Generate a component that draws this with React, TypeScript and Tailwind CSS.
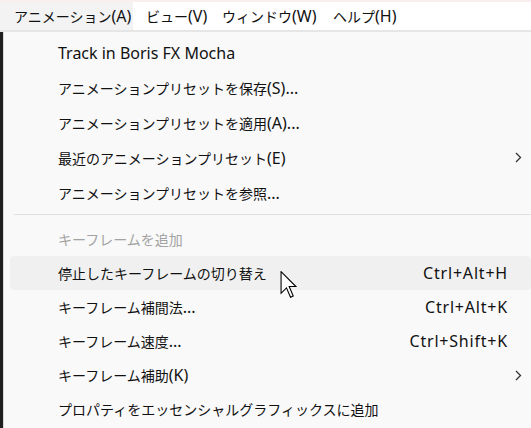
import React from "react";

type Item =
  | { kind: "item"; label: string; shortcut?: string; sub?: boolean; disabled?: boolean; active?: boolean }
  | { kind: "sep" };

const top: Item[] = [
  { kind: "item", label: "Track in Boris FX Mocha" },
  { kind: "item", label: "アニメーションプリセットを保存(S)..." },
  { kind: "item", label: "アニメーションプリセットを適用(A)..." },
  { kind: "item", label: "最近のアニメーションプリセット(E)", sub: true },
  { kind: "item", label: "アニメーションプリセットを参照..." },
];

const bottom: Item[] = [
  { kind: "item", label: "キーフレームを追加", disabled: true },
  { kind: "item", label: "停止したキーフレームの切り替え", shortcut: "Ctrl+Alt+H", active: true },
  { kind: "item", label: "キーフレーム補間法...", shortcut: "Ctrl+Alt+K" },
  { kind: "item", label: "キーフレーム速度...", shortcut: "Ctrl+Shift+K" },
  { kind: "item", label: "キーフレーム補助(K)", sub: true },
  { kind: "item", label: "プロパティをエッセンシャルグラフィックスに追加" },
];

// latin runs get a bigger size so they match the Segoe-like widths
function Text({ s }: { s: string }) {
  const parts = s.match(/[\x20-\x7e]+|[^\x20-\x7e]+/g) ?? [];
  return (
    <>
      {parts.map((p, i) =>
        /^[\x20-\x7e]+$/.test(p) ? (
          <span key={i} className="text-[16px]">
            {p}
          </span>
        ) : (
          <span key={i}>{p}</span>
        )
      )}
    </>
  );
}

function Chevron() {
  return (
    <svg width="7" height="11" viewBox="0 0 7 11" fill="none">
      <path d="M1 1l4.5 4.5L1 10" stroke="#333" strokeWidth="1.3" />
    </svg>
  );
}

function Cursor() {
  return (
    <svg
      className="absolute left-[280px] top-[271px]"
      width="17"
      height="27"
      viewBox="-0.5 -0.5 12 20"
    >
      <path
        d="M0 0L0 16L4 12L7 19L9 18L6 11L11 11Z"
        fill="#fff"
        stroke="#000"
        strokeWidth="0.8"
      />
    </svg>
  );
}

function Row({ item, h }: { item: Item; h: string }) {
  if (item.kind === "sep") return null;
  return (
    <div
      className={`flex items-center ${h} ml-[6px] pl-[48px] rounded-[4px] ${
        item.active ? "bg-[#f0f0f0]" : ""
      } ${item.disabled ? "text-[#a3a3a3]" : "text-[#111]"}`}
    >
      <span className="flex-1 whitespace-nowrap">
        <Text s={item.label} />
      </span>
      {item.shortcut && (
        <span className="whitespace-nowrap text-[16px] tracking-[0.8px]">{item.shortcut}</span>
      )}
      <span className="w-[23px] pl-[7px] flex items-center">{item.sub && <Chevron />}</span>
    </div>
  );
}

export default function App() {
  const menus = ["ビュー(V)", "ウィンドウ(W)", "ヘルプ(H)"];
  return (
    <div
      className="relative w-[531px] h-[428px] overflow-hidden bg-[#f9f9f9] text-[14px]"
      style={{ fontFamily: '"Noto Sans", "Noto Sans CJK JP", sans-serif' }}
    >
      <div className="h-[2px] bg-[#fbeeee]" />
      <div className="h-[28px] bg-white flex items-center text-[#111]">
        <div className="h-full w-[133px] pl-[14px] flex items-center bg-[#f3f3f3] whitespace-nowrap">
          <Text s="アニメーション(A)" />
        </div>
        {menus.map((m, i) => (
          <div
            key={m}
            className={`h-full flex items-center whitespace-nowrap ${
              i === 0 ? "pl-[13px] w-[89px]" : i === 1 ? "w-[111px]" : ""
            }`}
          >
            <Text s={m} />
          </div>
        ))}
      </div>
      <div className="h-[2px] bg-[#e6e6e6]" />
      <div className="flex h-full">
        <div className="w-[3px] bg-[#1f1f1f]" />
        <div className="w-px bg-[#dadada]" />
        <div className="flex-1 pt-[3px]">
          {top.map((it, i) => (
            <Row key={i} item={it} h="h-[35px]" />
          ))}
          <div className="h-px bg-[#e0e0e0] ml-[10px] mt-[4px] mb-[7px]" />
          {bottom.map((it, i) => (
            <Row key={i} item={it} h="h-[34px]" />
          ))}
        </div>
      </div>
      <Cursor />
    </div>
  );
}
